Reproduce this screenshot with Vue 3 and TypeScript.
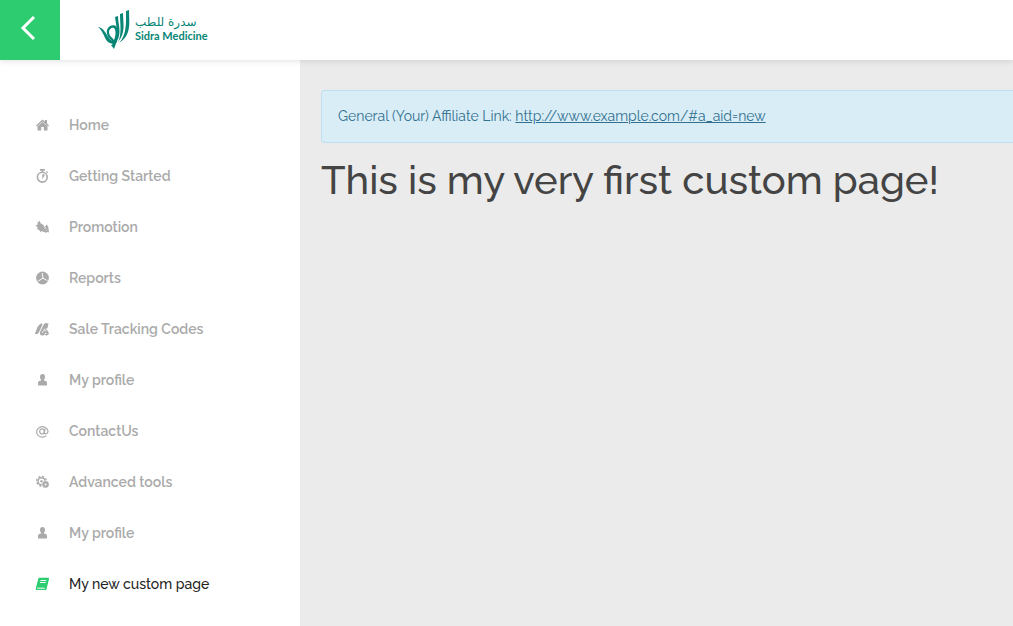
<script setup lang="ts">
import { ref } from 'vue'

interface NavItem {
  label: string
  icon: string
}

const items: NavItem[] = [
  { label: 'Home', icon: 'home' },
  { label: 'Getting Started', icon: 'timer' },
  { label: 'Promotion', icon: 'promo' },
  { label: 'Reports', icon: 'pie' },
  { label: 'Sale Tracking Codes', icon: 'codes' },
  { label: 'My profile', icon: 'user' },
  { label: 'ContactUs', icon: 'at' },
  { label: 'Advanced tools', icon: 'gears' },
  { label: 'My profile', icon: 'user' },
  { label: 'My new custom page', icon: 'book' },
]
const active = ref(items.length - 1)
</script>

<template>
  <div class="page">
    <header class="topbar">
      <button class="back" type="button" aria-label="Back">
        <svg width="16" height="26" viewBox="0 0 16 26"><path d="M14 2 3 13l11 11" fill="none" stroke="#fff" stroke-width="3" /></svg>
      </button>
      <a class="brand" href="#" aria-label="Sidra Medicine">
        <svg width="34" height="40" viewBox="0 0 34 40" fill="#078676">
          <path d="M1 17C7 18 9 24 12 28C14 31 17 32 19 30L20 32C17 35 13 34 10 31C7 27 6 21 1 17Z" />
          <path fill-rule="evenodd" d="M17 39L14 35C16 35 16 33 15 31C12 28 9 25 10 20C11 16 16 14 19 16C22 20 21 30 17 39ZM17 30C19 25 19 20 17 18C15 17 12 19 12 22C12 26 15 27 17 30Z" />
          <path d="M18 7L21 6C21 14 25 23 20 31L18 34C22 24 19 16 18 7Z" />
          <path d="M23 4L26 3C26 13 29 23 21 32C25 24 23 14 23 4Z" />
          <path d="M29 1L32 0C32 12 35 25 22 33C30 25 29 12 29 1Z" />
        </svg>
        <span class="wordmark">
          <span class="arabic" lang="ar" dir="rtl">سدرة للطب</span>
          <span class="latin">Sidra Medicine</span>
        </span>
      </a>
    </header>

    <div class="body">
      <nav class="sidebar">
        <a
          v-for="(item, i) in items"
          :key="i"
          href="#"
          class="item"
          :class="{ active: i === active }"
          @click.prevent="active = i"
        >
          <svg class="icon" width="14" height="14" viewBox="0 0 14 14" fill="currentColor" aria-hidden="true">
            <template v-if="item.icon === 'home'">
              <path d="M7.500 1.500 9.800 3.500V2H12v3.500l2 2-.9 1L7.500 3.600 1.900 8.500 1 7.500Z" />
              <path d="M2.500 8.300 7.500 4l5 4.300V12.500H8.800V9H6.200v3.500H2.500Z" />
            </template>
            <template v-else-if="item.icon === 'timer'">
              <circle cx="7.300" cy="8.200" r="4.900" fill="none" stroke="currentColor" stroke-width="1.600" />
              <path d="M5 0h4.900v1.700H8.200V3.500H6.700V1.700H5ZM11 2.900l.9-.9 1.300 1.300-.9.9ZM7.300 8.500V5.200L10 5.600 9.100 7.600 7.300 10Z" />
            </template>
            <template v-else-if="item.icon === 'promo'">
              <path d="M2.800 1 3.800 2.500 4.500.5l1.300 3L8.500 5l.5 2v5l-2.500-1-.7 1.500-1.600-2.500L2 9l.8-1.500L.5 5.500l2-.7Z" />
              <path d="M8.500 8 11.800 4.500 13.300 7l.7 5.500-2-.7-.5 1.200-3-1.500Z" />
              <path d="M9.500 9l1.500-2M11 10.500l1-1" stroke="#fff" stroke-width=".8" />
            </template>
            <template v-else-if="item.icon === 'pie'">
              <circle cx="7.500" cy="7" r="6.400" />
              <path d="M7.200 2 8 7.200 2.800 10.200M8 7.200l4.500 2.500" fill="none" stroke="#fff" stroke-width=".9" />
            </template>
            <template v-else-if="item.icon === 'codes'">
              <path d="M0 11.500 2.500 5 5 2l2-.8L7.500 3 4 10.500 2.500 12H0ZM4.500 10 8.500 2.500 10.500 1l3 .5L12.500 6l-1.500 1L13 9l1 3-2.500 1.800L9.500 12.500 8 13.800 5.500 13Z" />
              <path d="M3.800 11.500 8.300 2.500M7 11 10 6.500M9.500 8.500l2 .5M9.700 11.500h2" fill="none" stroke="#fff" stroke-width=".8" />
            </template>
            <template v-else-if="item.icon === 'user'">
              <ellipse cx="7.500" cy="4" rx="2.500" ry="3" />
              <path d="M6.100 5h2.800v2.400c2 .3 3.100 1 3.100 2.500v2.600H3V9.900c0-1.500 1.100-2.200 3.100-2.500Z" />
            </template>
            <g v-else-if="item.icon === 'at'" fill="none" stroke="currentColor" stroke-width="1.200">
              <path d="M11.400 11.600A5.700 5.200 0 1 1 13 7.200C13 9.700 9.500 11 9.300 8.700L10 4.700" />
              <ellipse cx="7" cy="7.400" rx="2.300" ry="2.600" />
            </g>
            <template v-else-if="item.icon === 'gears'">
              <circle cx="6.500" cy="6.200" r="3.500" fill="none" stroke="currentColor" stroke-width="1.500" />
              <circle cx="6.500" cy="6.200" r="4.800" fill="none" stroke="currentColor" stroke-width="1.400" stroke-dasharray="2 1.770" />
              <circle cx="6.500" cy="6.200" r="1.200" />
              <circle cx="10.600" cy="9.400" r="3.600" stroke="#fff" stroke-width=".5" />
              <circle cx="10.600" cy="9.400" r="1" fill="#fff" />
            </template>
            <template v-else>
              <path d="M4.300.8h9c.7 0 .9.5.7 1.200l-2.400 9.800c-.2.800-.6 1.200-1.400 1.200H2C.9 13 .6 12 .8 11.200L3.200 2C3.400 1.200 3.700.8 4.300.8Z" />
              <path d="M5.500 3.500h5.700M5 5.500h5.700M2.200 11.200h7.600" stroke="#fff" stroke-width="1" />
            </template>
          </svg>
          <span>{{ item.label }}</span>
        </a>
      </nav>

      <main class="content">
        <p class="notice">General (Your) Affiliate Link: <a href="#a_aid=new">http://www.example.com/#a_aid=new</a></p>
        <h1>This is my very first custom page!</h1>
      </main>
    </div>
  </div>
</template>

<style>
body {
  margin: 0;
  background: #ebebeb;
}
</style>

<style scoped>
.page {
  min-height: 100vh;
  display: flex;
  flex-direction: column;
  font-family: Raleway, Lato, "Open Sans", sans-serif;
  overflow: hidden;
}
.topbar {
  display: flex;
  height: 60px;
  background: #fff;
  box-shadow: 0 1px 6px rgba(0, 0, 0, 0.12);
  position: relative;
}
.back {
  width: 60px;
  border: 0;
  padding: 0 4px 4px 0;
  background: #2ecc71;
  display: flex;
  align-items: center;
  justify-content: center;
  cursor: pointer;
}
.brand {
  display: flex;
  align-items: center;
  gap: 4px;
  margin-left: 37px;
  color: #078676;
  text-decoration: none;
}
.wordmark {
  display: flex;
  flex-direction: column;
  align-items: flex-start;
  padding-bottom: 4px;
}
.arabic {
  font: 400 12px/14px "DejaVu Sans", sans-serif;
}
.latin {
  font: 700 11px/13px Lato, "Open Sans", sans-serif;
}
.body {
  flex: 1;
  display: flex;
}
.sidebar {
  flex: 0 0 300px;
  box-sizing: border-box;
  padding-top: 39px;
  background: #fff;
}
.item {
  display: flex;
  align-items: center;
  gap: 20px;
  height: 51px;
  padding-left: 35px;
  color: #aaa;
  font-size: 14px;
  font-weight: 600;
  line-height: 20px;
  text-decoration: none;
}
.icon {
  flex: none;
}
.item.active {
  color: #222;
  font-weight: 500;
}
.item.active .icon {
  color: #2ecc71;
}
.content {
  flex: 1;
  min-width: 0;
  padding: 30px 0 0 21px;
}
.notice {
  margin: 0;
  padding: 15px 16px;
  border: 1px solid #bce0f1;
  border-right: 0;
  border-radius: 4px 0 0 4px;
  background: #d9edf7;
  color: #31708f;
  font-size: 14px;
  font-weight: 400;
  line-height: 21px;
}
.notice a {
  color: inherit;
}
h1 {
  margin: 12px 0 0;
  color: #444;
  font-size: 40px;
  font-weight: 500;
  line-height: 50px;
}
</style>
